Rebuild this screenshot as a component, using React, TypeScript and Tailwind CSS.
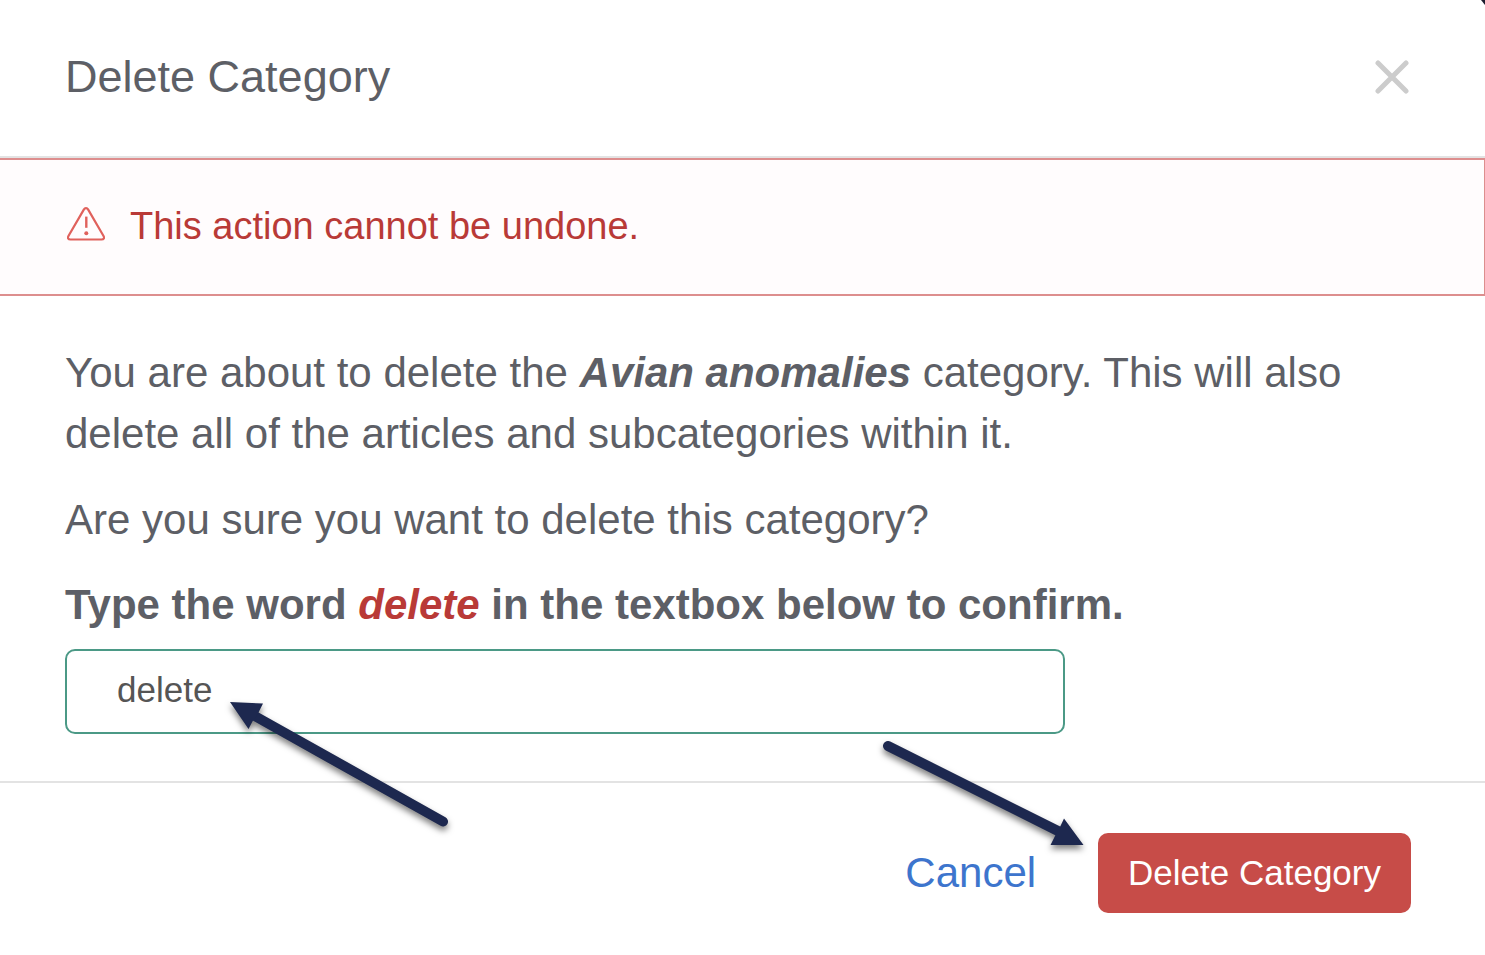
import { useState } from "react";

const CONFIRM_WORD = "delete";

function WarningIcon() {
  return (
    <svg viewBox="0 0 38 34" className="mb-1 h-[34px] w-[38px] shrink-0" fill="none" stroke="#e0615c" aria-hidden="true">
      <path
        d="M16.800 2.600c1.100-1.900 3.300-1.900 4.400 0l15.200 26.200c1.300 2.300.5 3.700-1.900 3.700H3.500c-2.400 0-3.200-1.400-1.900-3.700z"
        strokeWidth="2.200"
        strokeLinejoin="round"
      />
      <path d="M19.300 9.600v11.200" strokeWidth="2.400" />
      <circle cx="19.300" cy="26.200" r="2" fill="#e0615c" stroke="none" />
    </svg>
  );
}

function CloseIcon() {
  return (
    <svg viewBox="0 0 34 34" className="size-[34px]" stroke="#cccccc" strokeWidth="5" strokeLinecap="round" aria-hidden="true">
      <path d="M3 3l28 28M31 3L3 31" />
    </svg>
  );
}

function InputArrow() {
  return (
    <svg
      viewBox="0 0 230 130"
      className="pointer-events-none absolute left-[164px] top-[52px] h-[130px] w-[230px] overflow-visible drop-shadow-[0_4px_3px_rgba(0,0,0,0.5)]"
      aria-hidden="true"
    >
      <path d="M24 14L214 120.500" stroke="#1d284f" strokeWidth="10" strokeLinecap="round" />
      <path d="M1 1l33 1.500-4.500 9-5.500 8-4.500 8.500z" fill="#1d284f" />
    </svg>
  );
}

function ButtonArrow() {
  return (
    <svg
      viewBox="0 0 202 106"
      className="pointer-events-none absolute right-full top-[-93px] mr-[14px] h-[106px] w-[202px] overflow-visible drop-shadow-[0_4px_3px_rgba(0,0,0,0.5)]"
      aria-hidden="true"
    >
      <path d="M6 6L180 93" stroke="#1d284f" strokeWidth="10" strokeLinecap="round" />
      <path d="M182 78.500l19.500 26.500h-33l4.500-9 5-9z" fill="#1d284f" />
    </svg>
  );
}

export default function App() {
  const [value, setValue] = useState("delete");

  return (
    <div
      role="dialog"
      aria-labelledby="dialog-title"
      className="relative flex min-h-screen flex-col bg-white font-['Liberation_Sans',Arial,sans-serif] text-[#5d5f66]"
    >
      <svg viewBox="0 0 4 5" className="absolute right-0 top-0 h-[5px] w-1" aria-hidden="true">
        <path d="M0 0h4v5z" fill="#1b1c2e" />
      </svg>

      <header className="flex items-center justify-between border-b-2 border-[#e3e3e3] pb-[45px] pl-[65px] pr-[76px] pt-[43px]">
        <h1 id="dialog-title" className="text-[45px] leading-[68px]">
          Delete Category
        </h1>
        <button type="button" aria-label="Close">
          <CloseIcon />
        </button>
      </header>

      <div
        role="alert"
        className="flex items-center gap-[25px] border-y-2 border-r border-[#dd8e8e] bg-[#fffcfd] pb-[41px] pl-[67px] pr-[74px] pt-[39px] text-[38px] leading-[54px] text-[#b93a37]"
      >
        <WarningIcon />
        <p>This action cannot be undone.</p>
      </div>

      <main className="border-b-2 border-[#e3e3e3] pb-[47px] pl-[65px] pr-[74px] pt-[46px] text-[42px] leading-[61px]">
        <p className="mb-[25px]">
          You are about to delete the <strong className="font-bold italic">Avian anomalies</strong> category. This will
          also delete all of the articles and subcategories within it.
        </p>
        <p className="mb-6">Are you sure you want to delete this category?</p>
        <label htmlFor="confirm" className="mb-[14px] block font-bold">
          Type the word <em className="text-[#b93a37]">{CONFIRM_WORD}</em> in the textbox below to confirm.
        </label>
        <div className="relative max-w-[1000px]">
          <input
            id="confirm"
            type="text"
            value={value}
            onChange={(e) => setValue(e.target.value)}
            className="block h-[85px] w-full rounded-[10px] border-2 border-[#4b9986] bg-white px-[50px] pb-1 text-[35px] text-[#555555] outline-none"
          />
          <InputArrow />
        </div>
      </main>

      <footer className="flex items-center justify-end gap-[62px] pb-[42px] pl-[65px] pr-[74px] pt-[50px]">
        <button type="button" className="text-[42px] leading-[80px] text-[#3d75cd]">
          Cancel
        </button>
        <div className="relative">
          <button
            type="button"
            disabled={value !== CONFIRM_WORD}
            className="block h-20 rounded-[10px] bg-[#c74c48] px-[30px] text-[35px] text-white disabled:opacity-50"
          >
            Delete Category
          </button>
          <ButtonArrow />
        </div>
      </footer>
    </div>
  );
}
